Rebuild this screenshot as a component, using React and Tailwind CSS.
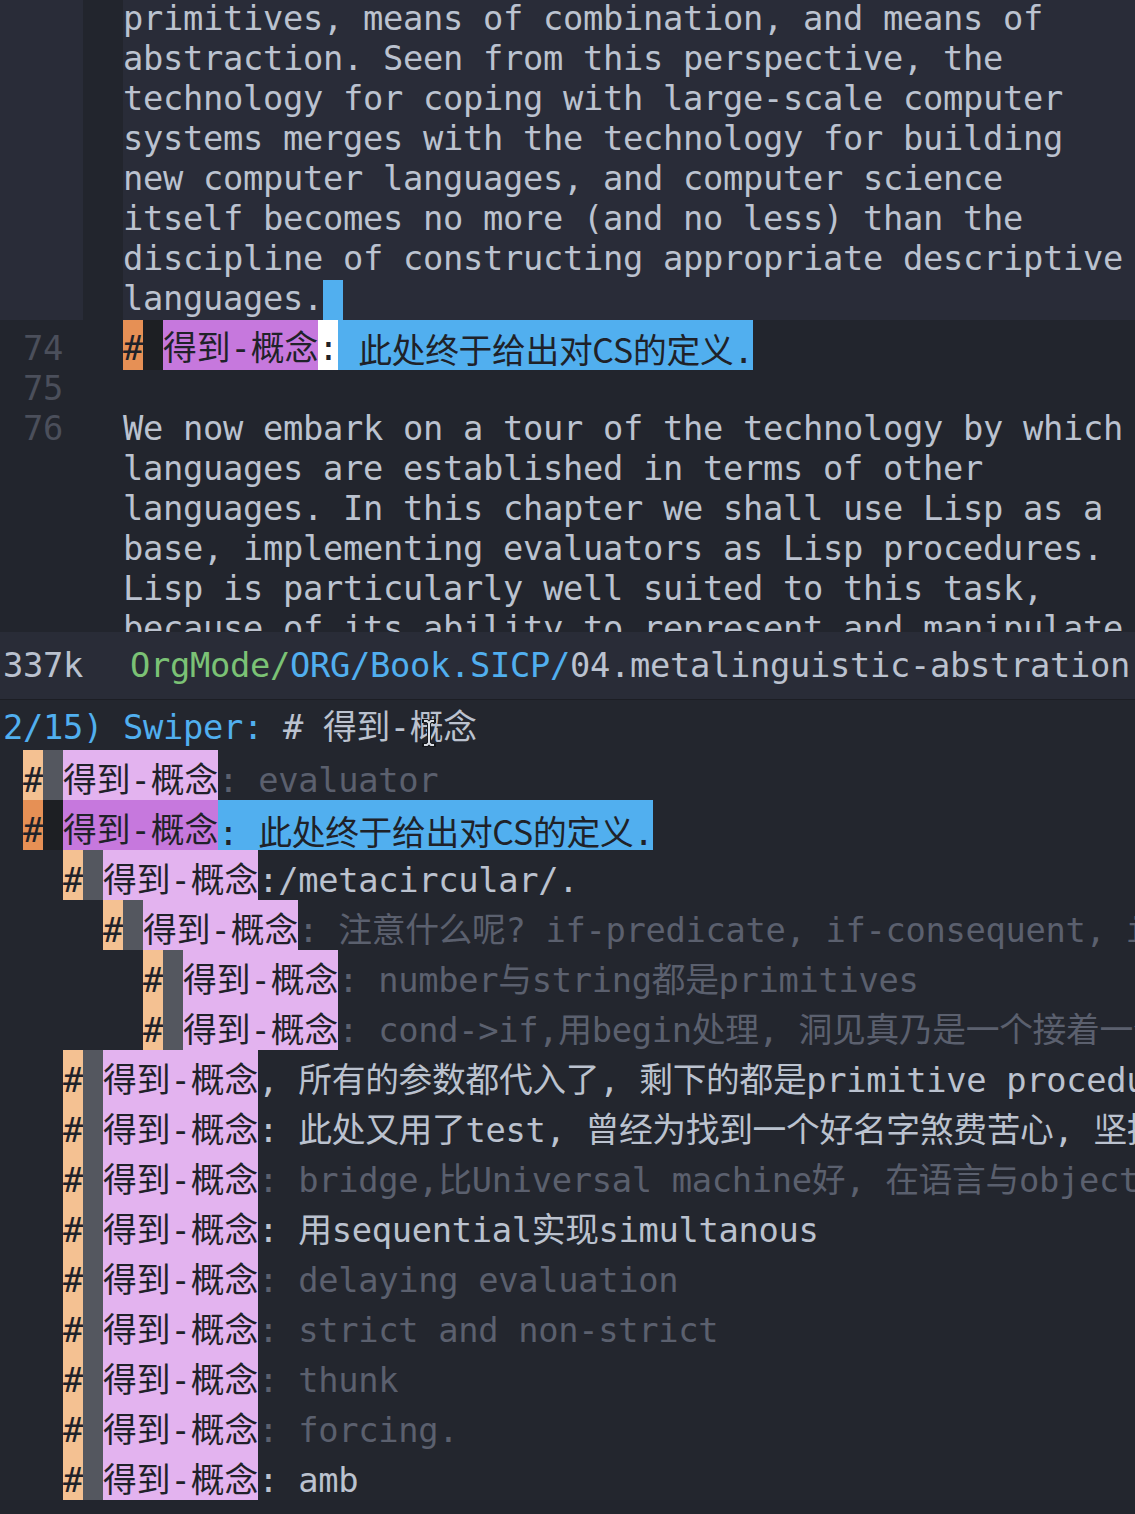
import React from "react";

// wrapped continuation of line 73 (current line, highlighted)
const line73 = [
  "primitives, means of combination, and means of",
  "abstraction. Seen from this perspective, the",
  "technology for coping with large-scale computer",
  "systems merges with the technology for building",
  "new computer languages, and computer science",
  "itself becomes no more (and no less) than the",
  "discipline of constructing appropriate descriptive",
];

const line76 = [
  "We now embark on a tour of the technology by which",
  "languages are established in terms of other",
  "languages. In this chapter we shall use Lisp as a",
  "base, implementing evaluators as Lisp procedures.",
  "Lisp is particularly well suited to this task,",
  "because of its ability to represent and manipulate",
];

const Def = () => (
  <>
    {" 此处终于给出对"}
    <span className="font-['Noto_Sans_CJK_SC',sans-serif] tracking-normal">CS</span>
    {"的定义."}
  </>
);

const matches = [
  { indent: "pl-[20px]", rest: ": evaluator", dim: true },
  { indent: "pl-[20px]", rest: null, selected: true },
  { indent: "pl-[60px]", rest: ":/metacircular/." },
  { indent: "pl-[100px]", rest: ": 注意什么呢? if-predicate, if-consequent, if-alternative", dim: true },
  { indent: "pl-[140px]", rest: ": number与string都是primitives", dim: true },
  { indent: "pl-[140px]", rest: ": cond->if,用begin处理, 洞见真乃是一个接着一个的解释", dim: true },
  { indent: "pl-[60px]", rest: ", 所有的参数都代入了, 剩下的都是primitive procedure" },
  { indent: "pl-[60px]", rest: ": 此处又用了test, 曾经为找到一个好名字煞费苦心, 坚持" },
  { indent: "pl-[60px]", rest: ": bridge,比Universal machine好, 在语言与object之间", dim: true },
  { indent: "pl-[60px]", rest: ": 用sequential实现simultanous" },
  { indent: "pl-[60px]", rest: ": delaying evaluation", dim: true },
  { indent: "pl-[60px]", rest: ": strict and non-strict", dim: true },
  { indent: "pl-[60px]", rest: ": thunk", dim: true },
  { indent: "pl-[60px]", rest: ": forcing.", dim: true },
  { indent: "pl-[60px]", rest: ": amb" },
];

const HlLine = ({ children }) => (
  <div className="flex h-[40px] leading-[37px]">
    <div className="w-[83px] shrink-0 bg-[#292c38]" />
    <div className="w-[40px] shrink-0" />
    <div className="flex flex-1 bg-[#292c38] text-[#bbc2cf]">{children}</div>
  </div>
);

const BufLine = ({ num, children }) => (
  <div className="flex h-[40px] leading-[37px]">
    <div className="w-[83px] shrink-0 pr-[20px] text-right text-[#4b4f5b]">{num}</div>
    <div className="w-[40px] shrink-0" />
    <div className="flex-1 text-[#bbc2cf]">{children}</div>
  </div>
);

const MatchRow = ({ m }) => {
  const sel = m.selected;
  return (
    <div className={`flex h-[50px] leading-[37px] ${m.indent}`}>
      <span className={`h-full shrink-0 pt-[12px] text-[#1f2229] ${sel ? "bg-[#e69055]" : "bg-[#f4c192]"}`}>#</span>
      <span className={`h-full w-[20px] shrink-0 ${sel ? "bg-[#1d1f23]" : "bg-[#54575f]"}`} />
      <span className={`h-full shrink-0 pt-[12px] tracking-normal text-[#1f2229] ${sel ? "bg-[#c678dd]" : "bg-[#e3b3ef]"}`}>得到-概念</span>
      {sel ? (
        <span className="h-full shrink-0 bg-[#51afef] pt-[12px] text-[#1f2229]">
          :<Def />
        </span>
      ) : (
        <span className={`h-full shrink-0 pt-[12px] ${m.dim ? "text-[#5b606e]" : "text-[#bbc2cf]"}`}>{m.rest}</span>
      )}
    </div>
  );
};

export default function App() {
  return (
    <div className="h-[1514px] w-[1135px] overflow-hidden whitespace-pre bg-[#22252d] font-['DejaVu_Sans_Mono','Noto_Sans_CJK_SC',monospace] text-[33.75px] tracking-[-0.32px]">
      {/* buffer */}
      <div className="h-[632px] overflow-hidden">
        {line73.map((t) => (
          <HlLine key={t}>{t}</HlLine>
        ))}
        <HlLine>
          <span className="shrink-0">languages.</span>
          <span className="h-[40px] w-[20px] shrink-0 bg-[#51afef]" />
        </HlLine>

        <div className="flex h-[50px] leading-[37px]">
          <div className="w-[83px] shrink-0 pr-[20px] pt-[10px] text-right text-[#4b4f5b]">74</div>
          <div className="w-[40px] shrink-0" />
          <span className="h-full shrink-0 bg-[#e69055] pt-[10px] text-[#1f2229]">#</span>
          <span className="h-full w-[20px] shrink-0 bg-[#1d1f23]" />
          <span className="h-full shrink-0 bg-[#c678dd] pt-[10px] tracking-normal text-[#1f2229]">得到-概念</span>
          <span className="h-full shrink-0 bg-white pt-[10px] text-[#1f2229]">:</span>
          <span className="h-full shrink-0 bg-[#51afef] pt-[10px] text-[#1f2229]">
            <Def />
          </span>
        </div>

        <BufLine num="75" />
        {line76.map((t, i) => (
          <BufLine key={t} num={i === 0 ? "76" : ""}>
            {t}
          </BufLine>
        ))}
      </div>

      {/* mode line */}
      <div className="flex h-[68px] border-b border-[#1c1e24] bg-[#292c37] pl-[3px] pt-[15px] leading-[37px]">
        <span className="shrink-0 text-[#bbc2cf]">337k</span>
        <span className="ml-[47px] shrink-0 text-[#7bc275]">OrgMode/</span>
        <span className="shrink-0 text-[#51afef]">ORG/Book.SICP/</span>
        <span className="shrink-0 text-[#bbc2cf]">04.metalinguistic-abstration</span>
      </div>

      {/* minibuffer */}
      <div className="bg-[#23262e] pl-[3px]">
        <div className="relative flex h-[50px] pt-[9px] leading-[37px]">
          <span className="shrink-0 text-[#51afef]">2/15) Swiper: </span>
          <span className="shrink-0 text-[#bbc2cf]"># 得到-概念</span>
          <svg className="absolute left-[418px] top-[18px]" width="16" height="30" viewBox="0 0 16 30">
            <path d="M3 3h3l2 2 2-2h3M8 5v20M3 27h3l2-2 2 2h3" fill="none" stroke="#15171b" strokeWidth="4" strokeLinecap="square" />
            <path d="M3 3h3l2 2 2-2h3M8 5v20M3 27h3l2-2 2 2h3" fill="none" stroke="#d9dde4" strokeWidth="2" />
          </svg>
        </div>
        {matches.map((m, i) => (
          <MatchRow key={i} m={m} />
        ))}
      </div>
    </div>
  );
}
